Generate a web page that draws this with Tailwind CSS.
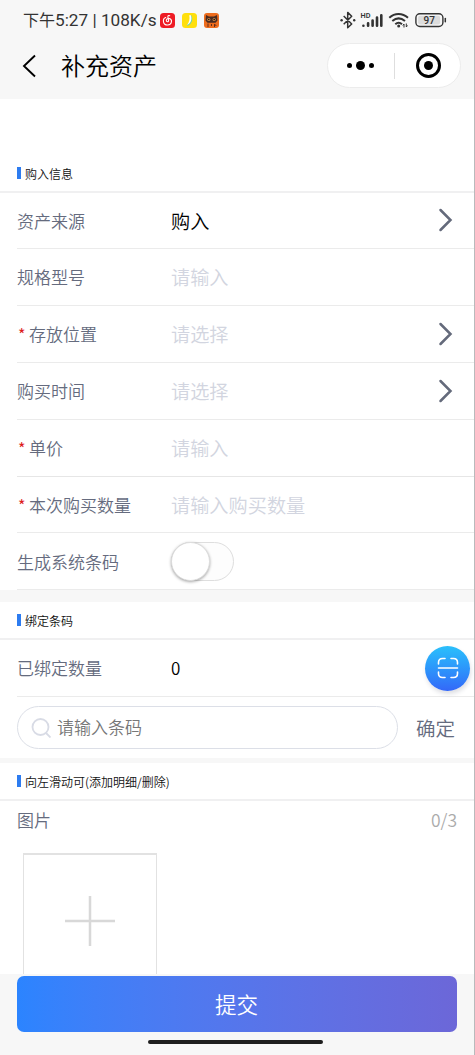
<!DOCTYPE html>
<html lang="zh-CN">
<head>
<meta charset="utf-8">
<meta name="viewport" content="width=device-width, initial-scale=1">
<title>补充资产</title>
<script src="https://cdn.jsdelivr.net/npm/@tailwindcss/browser@4"></script>
</head>
<body class="bg-white">
<div class="relative flex h-[1055px] w-[475px] flex-col overflow-hidden border-r border-[#b9babc] bg-white font-['Noto_Sans_CJK_SC',sans-serif] font-[350] text-[#656b7e]">

  <header class="h-[99px] shrink-0 bg-[#f7f7f7]">
    <div class="flex h-10 items-center pl-[23px] text-[#333]">
      <span class="w-[135px] whitespace-nowrap font-['Roboto','Noto_Sans_CJK_SC',sans-serif] text-[17.2px] leading-5 font-normal"><span class="text-[16px]">下午</span>5:27 | 108K/s</span>
      <svg class="ml-[2px] size-[15px]" viewBox="0 0 15 15"><rect width="15" height="15" rx="3.5" fill="#ee1c25"/><path d="M9.7 2.8c-1.3-.6-2 .1-1.8 1.1l.7 3.5c.3 1.6-2.3 1.8-2.3.1 0-1.5 1.5-2.3 3-2 3.400.8 2.800 6.300-1.500 6.500-5.200.2-5.600-6.200-2.100-7.500" fill="none" stroke="#fff" stroke-width="1.1" stroke-linecap="round"/></svg>
      <svg class="ml-[7px] size-[15px]" viewBox="0 0 15 15"><rect width="15" height="15" rx="3.5" fill="#ffdf0d"/><path d="M8.900 2.700c1.500 3.500.7 7.600-3.500 9.500" fill="none" stroke="#72d6a5" stroke-width="1.500"/><path d="M7.200 2.300h1.700c1.200 4.200.2 7.700-3.800 9.800 2.200-3 3-6.400 2.100-9.800z" fill="#fff"/></svg>
      <svg class="ml-[7px] size-[15px]" viewBox="0 0 15 15"><rect width="15" height="15" rx="3" fill="#ed6c1d"/><path d="M1.500 7.500 2 2l3 1.600h5L13 2l.5 5.500-2 2.300H3.500z" fill="#4a2b20"/><circle cx="4.800" cy="6.500" r="1.600" fill="#d28b45"/><circle cx="10.200" cy="6.500" r="1.600" fill="#d28b45"/><circle cx="4.800" cy="6.500" r=".8" fill="#111"/><circle cx="10.200" cy="6.500" r=".8" fill="#111"/><path d="M4 14v-3.500M7.500 13v-2M10.500 14v-3l1.800 2" stroke="#63301c" fill="none"/></svg>
      <svg class="ml-[121px] h-5 w-[107px]" viewBox="0 0 107 20" fill="none" stroke="#333">
        <path d="m3.700 6 8 8-4 3.800V2.400l4 3.800-8 8" stroke-width="1.500" stroke-linejoin="round"/>
        <circle cx="1.600" cy="10.200" r="1.200" fill="#333" stroke="none"/><circle cx="14.200" cy="10.200" r="1.200" fill="#333" stroke="none"/>
        <text x="20.500" y="8.300" font-family="Roboto" font-size="7.300" font-weight="600" fill="#333" stroke="none">HD</text>
        <g stroke-width="2.600" stroke-linecap="round"><path d="M23.400 15.700v.1M28.100 13.300v2.500M32.600 10.600v5.200M37 7.600v8.200M41.300 5.200v10.600"/></g>
        <g stroke-width="2"><path d="M49.300 7.700c5.500-5 13-5 18.700 0M52.300 11.100c4-3.400 8.700-3.400 12.700 0M55.300 14.300c2-1.900 4.700-1.900 6.700 0"/></g>
        <circle cx="58.700" cy="15.900" r="1.500" fill="#333" stroke="none"/><path d="M64 17.500V14l-1.200 1.500M66.300 13.500V17l1.200-1.500" stroke-width="1"/>
        <rect x="75.900" y="3.700" width="27" height="12.800" rx="4" stroke-width="1.400"/><rect x="78.100" y="5.800" width="22" height="8.600" rx="2" fill="#dcdcdc" stroke="none"/>
        <path d="M105.300 8.600v3.200" stroke-width="1.500" stroke-linecap="round"/>
        <text x="89.200" y="13.700" text-anchor="middle" font-family="Roboto" font-size="10" font-weight="500" fill="#333" stroke="none">97</text>
      </svg>
    </div>
    <div class="flex h-[52px] items-center pl-[22px] text-black">
      <svg class="h-6 w-4" viewBox="0 0 16 24" fill="none" stroke="#000" stroke-width="1.900"><path d="M13 1.500 2 12l11 10.500"/></svg>
      <h1 class="ml-[23px] w-[120px] pb-[2px] text-[24px] leading-8 font-[350]">补充资产</h1>
      <div class="mb-px ml-[146px] flex h-[45px] w-[134px] items-center rounded-full border border-[#ececec] bg-white">
        <div class="flex w-[66px] items-center justify-center gap-[4px] pr-[2px]"><i class="size-[5px] rounded-full bg-black"></i><i class="size-[9px] rounded-full bg-black"></i><i class="size-[5px] rounded-full bg-black"></i></div>
        <i class="h-[26px] w-px bg-[#dedede]"></i>
        <div class="flex flex-1 justify-center pl-[2px]"><div class="flex size-[25px] items-center justify-center rounded-full border-[3px] border-black"><i class="size-[9px] rounded-full bg-black"></i></div></div>
      </div>
    </div>
  </header>

  <main class="h-[875px] shrink-0 overflow-hidden">
    <section class="pt-[56px]">
      <div class="flex h-[38px] items-center border-b-2 border-[#f0f0f1] pl-[17px]"><i class="h-3 w-1 bg-[#2d7cf0]"></i><h2 class="ml-1 pt-[2px] text-[12px] leading-4 font-[350] text-[#111]">购入信息</h2></div>
      <div class="pl-[17px]">
        <div class="flex h-[56px] items-center border-b border-[#ebebeb] pr-[21px]"><span class="w-[154px] text-[17px]">资产来源</span><span class="flex-1 pt-px text-[19.2px] text-black">购入</span><svg class="mb-px h-6 w-[15px]" viewBox="0 0 15 24" fill="none" stroke="#646a7b" stroke-width="2.500" stroke-linecap="round"><path d="m2.500 2 10 10-10 10"/></svg></div>
        <div class="flex h-[57px] items-center border-b border-[#ebebeb]"><span class="w-[154px] text-[17px]">规格型号</span><span class="text-[19.2px] text-[#d2d5e0]">请输入</span></div>
        <div class="flex h-[57px] items-center border-b border-[#ebebeb] pr-[21px]"><span class="flex w-[154px] items-center text-[17px]"><b class="w-[12px] pl-[1px] text-[16px] leading-5 font-normal text-[#dc1c1c]">*</b>存放位置</span><span class="flex-1 text-[19.2px] text-[#d2d5e0]">请选择</span><svg class="h-6 w-[15px]" viewBox="0 0 15 24" fill="none" stroke="#646a7b" stroke-width="2.500" stroke-linecap="round"><path d="m2.500 2 10 10-10 10"/></svg></div>
        <div class="flex h-[57px] items-center border-b border-[#ebebeb] pr-[21px]"><span class="w-[154px] text-[17px]">购买时间</span><span class="flex-1 text-[19.2px] text-[#d2d5e0]">请选择</span><svg class="h-6 w-[15px]" viewBox="0 0 15 24" fill="none" stroke="#646a7b" stroke-width="2.500" stroke-linecap="round"><path d="m2.500 2 10 10-10 10"/></svg></div>
        <div class="flex h-[57px] items-center border-b border-[#e6e6e6]"><span class="flex w-[154px] items-center text-[17px]"><b class="w-[12px] pl-[1px] text-[16px] leading-5 font-normal text-[#dc1c1c]">*</b>单价</span><span class="text-[19.2px] text-[#d2d5e0]">请输入</span></div>
        <div class="flex h-[56px] items-center border-b border-[#ebebeb]"><span class="flex w-[154px] items-center text-[17px]"><b class="w-[12px] pl-[1px] text-[16px] leading-5 font-normal text-[#dc1c1c]">*</b>本次购买数量</span><span class="pt-px text-[19.2px] text-[#d2d5e0]">请输入购买数量</span></div>
        <div class="flex h-[57px] items-center border-b border-[#ebebeb]"><span class="w-[154px] pt-px text-[17px]">生成系统条码</span><div class="h-[39px] w-[63px] rounded-full border border-[#dedede] bg-[#fdfdfd]"><i class="-mt-px -ml-px block size-[39px] rounded-full border border-[#ddd] bg-white shadow-[0_1px_3px_rgba(0,0,0,0.35)]"></i></div></div>
      </div>
    </section>

    <section class="border-t-[12px] border-[#f7f7f7]">
      <div class="flex h-[38px] items-center border-b-2 border-[#f0f0f1] pl-[17px]"><i class="h-3 w-1 bg-[#2d7cf0]"></i><h2 class="ml-1 pt-[2px] text-[12px] leading-4 font-[350] text-[#111]">绑定条码</h2></div>
      <div class="ml-[17px] flex h-[57px] items-center border-b border-[#ebebeb] pr-[4px]"><span class="w-[154px] text-[17px]">已绑定数量</span><span class="flex-1 text-[17px] text-black">0</span>
        <button class="flex size-[45px] items-center justify-center rounded-full bg-linear-to-b from-[#2bc0fb] to-[#3467f8] shadow-[1px_3px_4px_rgba(70,80,100,0.18)]"><svg class="size-[22px]" viewBox="0 0 22 22" fill="none" stroke="#fff" stroke-width="1.600" stroke-linecap="round"><path d="M1.500 7V5.500c0-2.500 1.500-4 4-4H8M14 1.500h2.500c2.500 0 4 1.500 4 4V7M20.500 15v1.500c0 2.500-1.500 4-4 4H14M8 20.500H5.500c-2.500 0-4-1.500-4-4V15M1.500 11h19"/></svg></button>
      </div>
      <div class="flex h-[61px] items-center px-[17px]">
        <div class="flex h-[43px] w-[381px] items-center rounded-full border border-[#dcdfe7] pl-[13px]"><svg class="size-5" viewBox="0 0 20 20" fill="none" stroke="#d8dbe5" stroke-width="1.800"><circle cx="9.500" cy="9" r="8"/><path d="m15 15 4.500 4.500"/></svg><span class="ml-[6px] pb-px text-[17px] text-[#777]">请输入条码</span></div>
        <span class="ml-[18px] whitespace-nowrap text-[19.500px]">确定</span>
      </div>
    </section>

    <section class="border-t-[5px] border-[#f7f7f7]">
      <div class="flex h-[38px] items-center border-b-2 border-[#f0f0f1] pl-[17px]"><i class="h-3 w-1 bg-[#2d7cf0]"></i><h2 class="ml-1 pt-[2px] text-[12px] leading-4 font-[350] text-[#111]">向左滑动可(添加明细/删除)</h2></div>
      <div class="flex h-[38px] items-center justify-between pr-[17px] pl-[17px]"><span class="text-[17px]">图片</span><span class="text-[17.500px] text-[#ababab]">0/3</span></div>
      <div class="mt-[14px] ml-[23px] flex size-[134px] items-center justify-center border-x border-t-2 border-[#e2e2e2]"><svg class="size-[50px]" viewBox="0 0 50 50" stroke="#d8d8d8" stroke-width="2.500"><path d="M25 0v50M0 25h50"/></svg></div>
    </section>
  </main>

  <footer class="flex flex-1 flex-col items-center bg-[#f7f7f7] pt-[2px]">
    <button class="mr-px flex h-[56px] w-[440px] items-center justify-center rounded-[7px] bg-linear-to-r from-[#2b84ff] to-[#6c67d8] text-[21.500px] text-white">提交</button>
    <i class="mt-2 mr-[3px] h-1 w-[175px] rounded-full bg-[#1e1e1e]"></i>
  </footer>
</div>
</body>
</html>
